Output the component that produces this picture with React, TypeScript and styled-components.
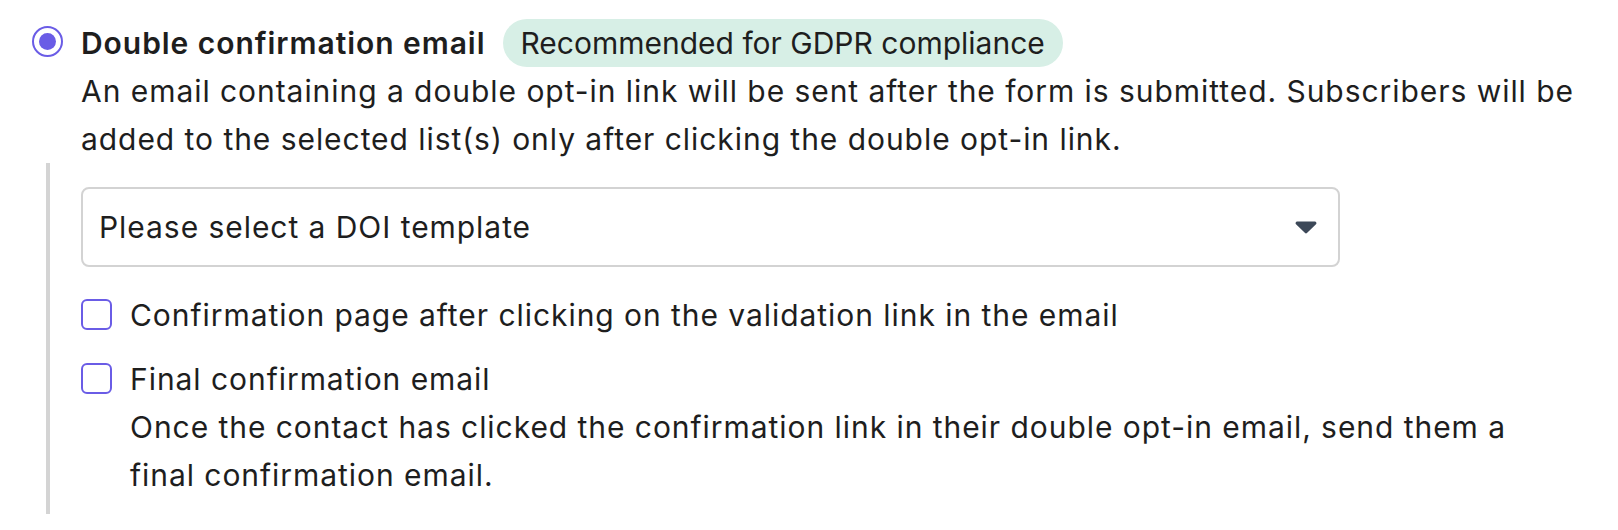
import React from "react";
import styled, { createGlobalStyle } from "styled-components";

const GlobalStyle = createGlobalStyle`
  html, body {
    margin: 0;
    padding: 0;
    background: #ffffff;
  }
  body {
    font-family: Inter, "Liberation Sans", Arial, sans-serif;
    color: #1e1e1e;
    -webkit-font-smoothing: antialiased;
  }
`;

const Page = styled.div`
  padding: 19px 32px 0 32px;
  font-size: 30px;
  line-height: 48px;
  letter-spacing: 0.95px;
  color: #1e1e1e;
`;

const OptionRow = styled.div`
  display: flex;
  align-items: flex-start;
  gap: 18px;
`;

const RadioOuter = styled.span`
  flex: none;
  box-sizing: border-box;
  width: 31px;
  height: 31px;
  margin-top: 7px;
  border-radius: 50%;
  border: 2px solid #6a5ce6;
  display: flex;
  align-items: center;
  justify-content: center;
`;

const RadioDot = styled.span`
  width: 17px;
  height: 17px;
  border-radius: 50%;
  background: #6a5ce6;
`;

const OptionBody = styled.div`
  flex: 1;
  min-width: 0;
`;

const TitleLine = styled.div`
  display: flex;
  align-items: center;
  gap: 18px;
`;

const Title = styled.span`
  font-weight: 600;
`;

const Badge = styled.span`
  display: inline-flex;
  align-items: center;
  height: 48px;
  padding: 0 18px 0 17px;
  border-radius: 24px;
  background: #d7efe6;
  color: #1e1e1e;
  letter-spacing: 0;
`;

const Description = styled.p`
  margin: 0;
`;

const Nested = styled.div`
  margin-left: 14px;
  border-left: 4px solid #d4d4d4;
  padding: 24px 40px 15px 31px;
  display: flex;
  flex-direction: column;
  gap: 24px;
`;

const SelectBox = styled.div`
  box-sizing: border-box;
  width: 1259px;
  height: 80px;
  border: 2px solid #d3d3d3;
  border-radius: 8px;
  display: flex;
  align-items: center;
  justify-content: space-between;
  padding: 0 21px 0 16px;
`;

const CheckList = styled.div`
  display: flex;
  flex-direction: column;
  gap: 16px;
`;

const CheckRow = styled.div`
  display: flex;
  align-items: flex-start;
  gap: 18px;
`;

const CheckBox = styled.span`
  flex: none;
  box-sizing: border-box;
  width: 31px;
  height: 31px;
  margin-top: 8px;
  border: 2px solid #6a5ce6;
  border-radius: 6px;
`;

const CheckText = styled.div`
  flex: 1;
  min-width: 0;
`;

const Caret = () => (
  <svg width="22" height="13" viewBox="0 0 22 13" aria-hidden="true">
    <path
      d="M2.2 0.5 H19.8 a1.6 1.6 0 0 1 1.2 2.7 L12.2 11.8 a1.7 1.7 0 0 1 -2.4 0 L1 3.2 A1.6 1.6 0 0 1 2.2 0.5 Z"
      fill="#3c4858"
    />
  </svg>
);

export default function App() {
  return (
    <>
      <GlobalStyle />
      <Page>
        <OptionRow>
          <RadioOuter>
            <RadioDot />
          </RadioOuter>
          <OptionBody>
            <TitleLine>
              <Title>Double confirmation email</Title>
              <Badge>Recommended for GDPR compliance</Badge>
            </TitleLine>
            <Description>
              An email containing a double opt-in link will be sent after the form is submitted.
              Subscribers will be added to the selected list(s) only after clicking the double
              opt-in link.
            </Description>
          </OptionBody>
        </OptionRow>
        <Nested>
          <SelectBox>
            <span>Please select a DOI template</span>
            <Caret />
          </SelectBox>
          <CheckList>
            <CheckRow>
              <CheckBox />
              <CheckText>Confirmation page after clicking on the validation link in the email</CheckText>
            </CheckRow>
            <CheckRow>
              <CheckBox />
              <CheckText>
                <div>Final confirmation email</div>
                <Description>
                  Once the contact has clicked the confirmation link in their double opt-in email,
                  send them a final confirmation email.
                </Description>
              </CheckText>
            </CheckRow>
          </CheckList>
        </Nested>
      </Page>
    </>
  );
}
